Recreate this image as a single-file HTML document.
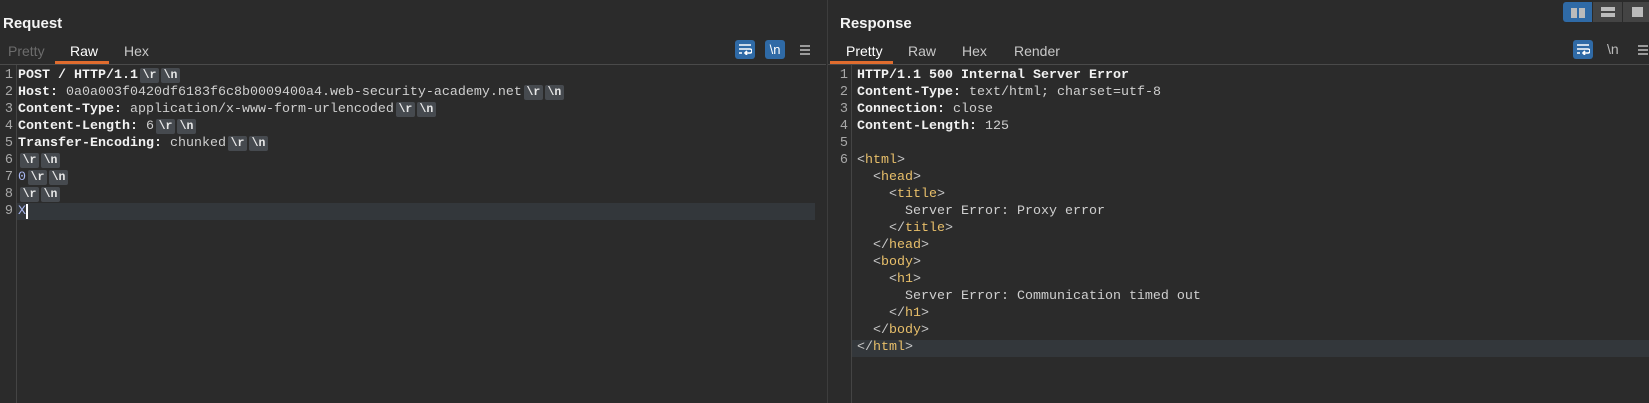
<!DOCTYPE html>
<html><head><meta charset="utf-8"><style>
*{margin:0;padding:0;box-sizing:border-box}
body{width:1649px;height:403px;background:#2b2b2b;font-family:"Liberation Sans",sans-serif;color:#ddd;position:relative;overflow:hidden}
.abs{position:absolute}
.title{font-size:15px;font-weight:bold;color:#f4f4f4;top:15px}
.tab{font-size:14px;top:43px;color:#c8c8c8}
.ul{height:3px;background:#e06c2e;top:61px}
.hr{height:1px;background:#4a4a4a;top:64px}
.code{font-family:"Liberation Mono",monospace;font-size:13.33px;line-height:17px;white-space:pre;color:#cfcfcf}
.code b{color:#f2f2f2;font-weight:bold}
.ln{font-family:"Liberation Mono",monospace;font-size:13.5px;line-height:17px;color:#a8a8a8;text-align:right;white-space:pre}
.t{display:inline-block;background:#464a4f;color:#e8e8e8;font-size:11.5px;line-height:15px;width:19px;text-align:center;border-radius:2px;margin-left:2px;vertical-align:0px;font-weight:bold}
.y{color:#e8bf6a}.g{color:#c8c8c8}
.btn{width:20px;height:19px;border-radius:3px;background:#2f6aa6;top:40px;color:#fff;font-size:13px;text-align:center;line-height:19px}
.menu{width:10px;height:2px;background:#9a9a9a;box-shadow:0 4px 0 #9a9a9a,0 8px 0 #9a9a9a}
</style></head><body>
<div class="abs title" style="left:3px">Request</div>
<div class="abs tab" style="left:8px;color:#6c6c6c">Pretty</div>
<div class="abs tab" style="left:70px;color:#fff">Raw</div>
<div class="abs tab" style="left:124px">Hex</div>
<div class="abs ul" style="left:55px;width:54px"></div>
<div class="abs hr" style="left:0;width:826px"></div>
<div class="abs btn" style="left:735px"><svg width="14" height="12" viewBox="0 0 14 12" style="margin-top:3px"><path d="M1 2h12M1 6h11a2 2 0 0 1 0 4H7M9 8l-2 2 2 2M1 10h3" stroke="#fff" stroke-width="1.6" fill="none"/></svg></div>
<div class="abs btn" style="left:765px">\n</div>
<div class="abs menu" style="left:800px;top:45px"></div>
<div class="abs" style="left:827px;top:0;width:1px;height:403px;background:#3d3d3d"></div>
<div class="abs" style="left:16px;top:65px;width:1px;height:338px;background:#444"></div>
<div class="abs" style="left:17px;top:203px;width:798px;height:17px;background:#33373b"></div>
<div class="abs ln" style="left:0;top:67px;width:13px">1
2
3
4
5
6
7
8
9</div>
<div class="abs code" style="left:18px;top:67px"><b>POST / HTTP/1.1</b><span class="t">\r</span><span class="t">\n</span>
<b>Host:</b> 0a0a003f0420df6183f6c8b0009400a4.web-security-academy.net<span class="t">\r</span><span class="t">\n</span>
<b>Content-Type:</b> application/x-www-form-urlencoded<span class="t">\r</span><span class="t">\n</span>
<b>Content-Length:</b> 6<span class="t">\r</span><span class="t">\n</span>
<b>Transfer-Encoding:</b> chunked<span class="t">\r</span><span class="t">\n</span>
<span class="t">\r</span><span class="t">\n</span>
<span style="color:#a9b7f0">0</span><span class="t">\r</span><span class="t">\n</span>
<span class="t">\r</span><span class="t">\n</span>
<span style="color:#a9b7f0">X</span><span style="border-left:2px solid #fff"></span></div>

<div class="abs title" style="left:840px">Response</div>
<div class="abs tab" style="left:846px;color:#fff">Pretty</div>
<div class="abs tab" style="left:908px">Raw</div>
<div class="abs tab" style="left:962px">Hex</div>
<div class="abs tab" style="left:1014px">Render</div>
<div class="abs ul" style="left:830px;width:63px"></div>
<div class="abs hr" style="left:828px;width:821px"></div>
<div class="abs" style="left:1563px;top:2px;width:29px;height:20px;background:#2f6aa6;border-radius:3px 0 0 3px"></div>
<div class="abs" style="left:1571px;top:8px;width:6px;height:10px;background:#bbb"></div>
<div class="abs" style="left:1579px;top:8px;width:6px;height:10px;background:#bbb"></div>
<div class="abs" style="left:1593px;top:2px;width:29px;height:20px;background:#444"></div>
<div class="abs" style="left:1601px;top:7px;width:14px;height:4px;background:#bbb"></div>
<div class="abs" style="left:1601px;top:13px;width:14px;height:4px;background:#bbb"></div>
<div class="abs" style="left:1623px;top:2px;width:26px;height:20px;background:#444"></div>
<div class="abs" style="left:1632px;top:7px;width:11px;height:10px;background:#bbb"></div>
<div class="abs btn" style="left:1573px"><svg width="14" height="12" viewBox="0 0 14 12" style="margin-top:3px"><path d="M1 2h12M1 6h11a2 2 0 0 1 0 4H7M9 8l-2 2 2 2M1 10h3" stroke="#fff" stroke-width="1.6" fill="none"/></svg></div>
<div class="abs" style="left:1607px;top:41px;color:#bbb;font-size:14px">\n</div>
<div class="abs menu" style="left:1638px;top:45px"></div>
<div class="abs" style="left:851px;top:65px;width:1px;height:338px;background:#444"></div>
<div class="abs" style="left:852px;top:340px;width:797px;height:17px;background:#33373b"></div>
<div class="abs ln" style="left:830px;top:67px;width:18px">1
2
3
4
5
6</div>
<div class="abs code" style="left:857px;top:67px"><b>HTTP/1.1 500 Internal Server Error</b>
<b>Content-Type:</b> text/html; charset=utf-8
<b>Connection:</b> close
<b>Content-Length:</b> 125

<span class="g">&lt;</span><span class="y">html</span><span class="g">&gt;</span>
  <span class="g">&lt;</span><span class="y">head</span><span class="g">&gt;</span>
    <span class="g">&lt;</span><span class="y">title</span><span class="g">&gt;</span>
      Server Error: Proxy error
    <span class="g">&lt;/</span><span class="y">title</span><span class="g">&gt;</span>
  <span class="g">&lt;/</span><span class="y">head</span><span class="g">&gt;</span>
  <span class="g">&lt;</span><span class="y">body</span><span class="g">&gt;</span>
    <span class="g">&lt;</span><span class="y">h1</span><span class="g">&gt;</span>
      Server Error: Communication timed out
    <span class="g">&lt;/</span><span class="y">h1</span><span class="g">&gt;</span>
  <span class="g">&lt;/</span><span class="y">body</span><span class="g">&gt;</span>
<span class="g">&lt;/</span><span class="y">html</span><span class="g">&gt;</span></div>
</body></html>
